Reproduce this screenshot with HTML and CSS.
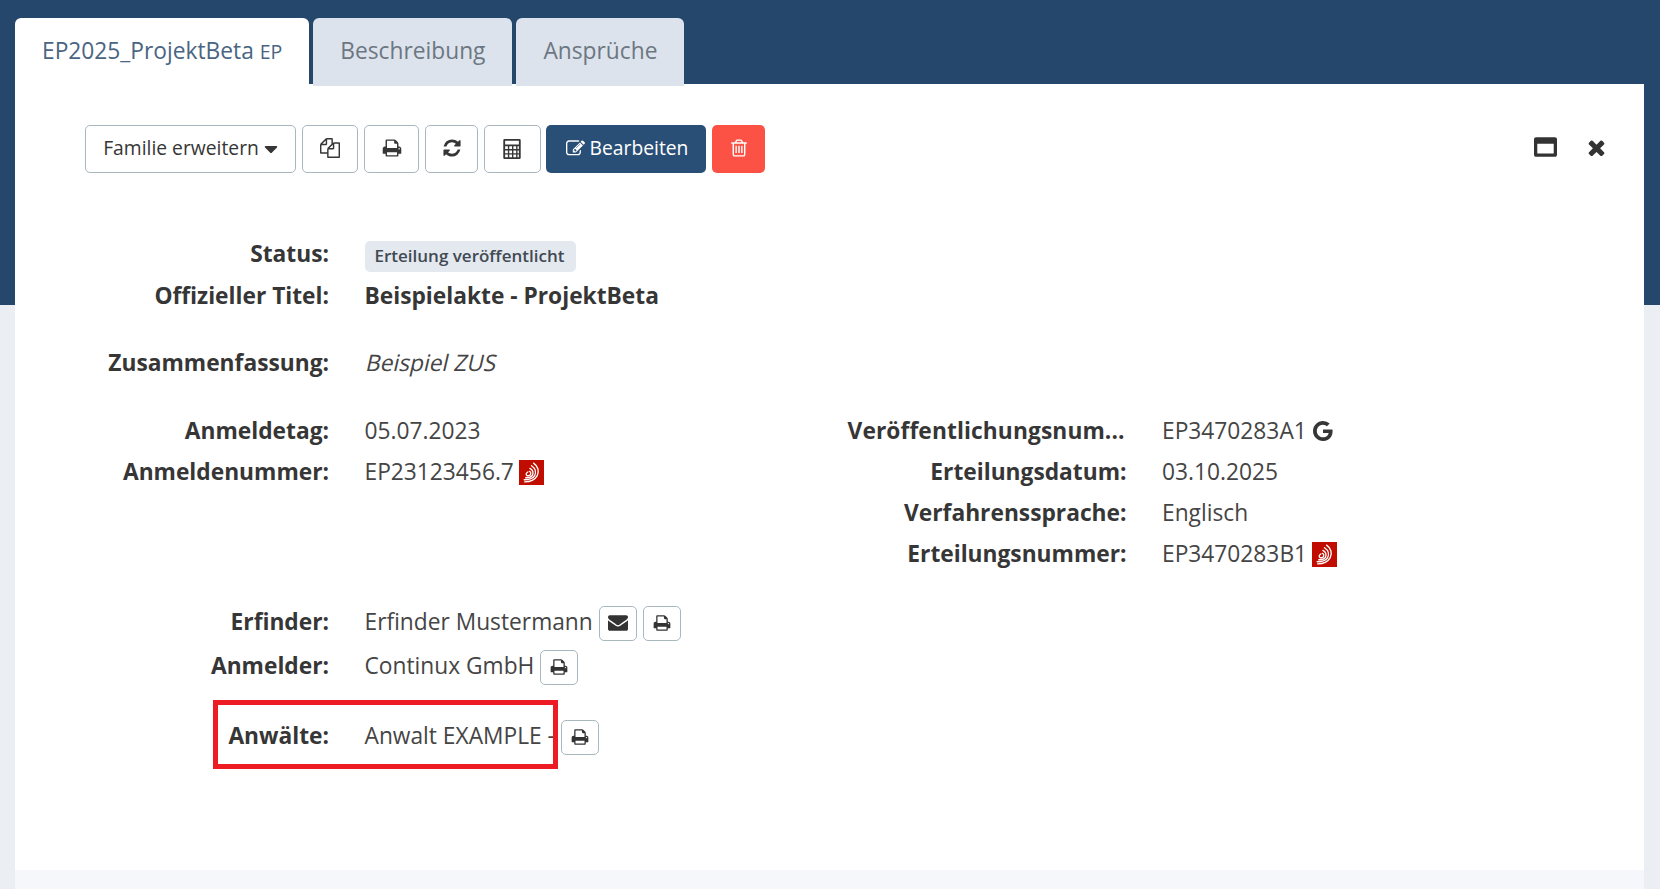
FILE: index.html
```html
<!DOCTYPE html>
<html lang="de">

<head>
    <meta charset="UTF-8">
    <title>EP2025_ProjektBeta</title>
    <link rel="stylesheet" href="styles.css">
</head>

<body>
    <svg class="icon-defs" xmlns="http://www.w3.org/2000/svg">
        <symbol id="i-print" viewBox="0 0 1792 1792"><path d="M448 1536h896v-256h-896v256zm0-640h896v-384h-160q-40 0-68-28t-28-68v-160h-640v640zm1152 64q0-26-19-45t-45-19-45 19-19 45 19 45 45 19 45-19 19-45zm128 0v416q0 13-9.500 22.500t-22.500 9.500h-224v160q0 40-28 68t-68 28h-960q-40 0-68-28t-28-68v-160h-224q-13 0-22.500-9.500t-9.500-22.500v-416q0-79 56.500-135.500t135.500-56.500h64v-544q0-40 28-68t68-28h672q40 0 88 20t76 48l152 152q28 28 48 76t20 88v256h64q79 0 135.500 56.500t56.500 135.500z"/></symbol>
        <symbol id="i-files" viewBox="0 0 1792 1792"><path d="M1696 384q40 0 68 28t28 68v1216q0 40-28 68t-68 28h-960q-40 0-68-28t-28-68v-288h-544q-40 0-68-28t-28-68v-672q0-40 20-88t48-76l408-408q28-28 76-48t88-20h416q40 0 68 28t28 68v328q68-40 128-40h416zm-544 213l-299 299h299v-299zm-640-384l-299 299h299v-299zm196 647l316-316v-416h-384v416q0 40-28 68t-68 28h-416v640h512v-256q0-40 20-88t48-76zm956 804v-1152h-384v416q0 40-28 68t-68 28h-416v640h896z"/></symbol>
        <symbol id="i-refresh" viewBox="0 0 1792 1792"><path d="M1639 1056q0 5-1 7-64 268-268 434.500t-478 166.500q-146 0-282.500-55t-243.500-157l-129 129q-19 19-45 19t-45-19-19-45v-448q0-26 19-45t45-19h448q26 0 45 19t19 45-19 45l-137 137q71 66 161 102t187 36q134 0 250-65t186-179q11-17 53-117 8-23 30-23h192q13 0 22.500 9.500t9.500 22.500zm25-800v448q0 26-19 45t-45 19h-448q-26 0-45-19t-19-45 19-45l138-138q-148-137-349-137-134 0-250 65t-186 179q-11 17-53 117-8 23-30 23h-199q-13 0-22.500-9.500t-9.500-22.500v-7q65-268 270-434.500t480-166.500q146 0 284 55.500t245 156.500l130-129q19-19 45-19t45 19 19 45z"/></symbol>
        <symbol id="i-calc" viewBox="0 0 20 24"><path fill-rule="evenodd" d="M2 1h16a1.500 1.500 0 0 1 1.500 1.500v19a1.500 1.500 0 0 1-1.500 1.500h-16a1.500 1.500 0 0 1-1.500-1.500v-19a1.500 1.500 0 0 1 1.500-1.500zm.5 2v4h15v-4zm0 6v3h3v-3zm4.500 0v3h3v-3zm4.500 0v3h3v-3zm4.500 0v3h1.500v-3zm-9 4.500v3h3v-3zm-4.500 0v3h3v-3zm9 0v3h3v-3zm4.500 0v3h1.500v-3zm-13.500 4.500v3h3v-3zm4.500 0v3h3v-3zm4.500 0v3h3v-3zm4.500 0v3h1.500v-3z"/></symbol>
        <symbol id="i-edit" viewBox="0 0 1792 1792"><path d="M888 1184l116-116-152-152-116 116v56h96v96h56zm440-720q-16-16-33 1l-350 350q-17 17-1 33t33-1l350-350q17-17 1-33zm80 594v190q0 119-84.500 203.500t-203.500 84.500h-832q-119 0-203.500-84.500t-84.500-203.500v-832q0-119 84.500-203.500t203.500-84.500h832q63 0 117 25 15 7 18 23 3 17-9 29l-49 49q-14 14-32 8-23-6-45-6h-832q-66 0-113 47t-47 113v832q0 66 47 113t113 47h832q66 0 113-47t47-113v-126q0-13 9-22l64-64q15-15 35-7t20 29zm-96-738l288 288-672 672h-288v-288zm444 132l-92 92-288-288 92-92q28-28 68-28t68 28l152 152q28 28 28 68t-28 68z"/></symbol>
        <symbol id="i-trash" viewBox="0 0 1792 1792"><path d="M704 736v576q0 14-9 23t-23 9h-64q-14 0-23-9t-9-23v-576q0-14 9-23t23-9h64q14 0 23 9t9 23zm256 0v576q0 14-9 23t-23 9h-64q-14 0-23-9t-9-23v-576q0-14 9-23t23-9h64q14 0 23 9t9 23zm256 0v576q0 14-9 23t-23 9h-64q-14 0-23-9t-9-23v-576q0-14 9-23t23-9h64q14 0 23 9t9 23zm128 724v-948h-896v948q0 22 7 40.500t14.500 27 10.500 8.500h832q3 0 10.500-8.500t14.500-27 7-40.500zm-672-1076h448l-48-117q-7-9-17-11h-317q-10 2-17 11zm928 32v64q0 14-9 23t-23 9h-96v948q0 83-47 143.500t-113 60.500h-832q-66 0-113-58.500t-47-141.500v-952h-96q-14 0-23-9t-9-23v-64q0-14 9-23t23-9h309l70-167q15-37 54-63t79-26h320q40 0 79 26t54 63l70 167h309q14 0 23 9t9 23z"/></symbol>
        <symbol id="i-caret" viewBox="320 640 1152 640"><path d="M1408 704q0 26-19 45l-448 448q-19 19-45 19t-45-19l-448-448q-19-19-19-45t19-45 45-19h896q26 0 45 19t19 45z"/></symbol>
        <symbol id="i-window" viewBox="0 128 1792 1536"><path d="M256 1408h1280v-768h-1280v768zm1536-1120v1216q0 66-47 113t-113 47h-1472q-66 0-113-47t-47-113v-1216q0-66 47-113t113-47h1472q66 0 113 47t47 113z"/></symbol>
        <symbol id="i-close" viewBox="256 256 1280 1280"><path d="M1490 1322q0 40-28 68l-136 136q-28 28-68 28t-68-28l-294-294-294 294q-28 28-68 28t-68-28l-136-136q-28-28-28-68t28-68l294-294-294-294q-28-28-28-68t28-68l136-136q28-28 68-28t68 28l294 294 294-294q28-28 68-28t68 28l136 136q28 28 28 68t-28 68l-294 294 294 294q28 28 28 68z"/></symbol>
        <symbol id="i-mail" viewBox="0 256 1792 1408"><path d="M1792 710v794q0 66-47 113t-113 47h-1472q-66 0-113-47t-47-113v-794q44 49 101 87 362 246 497 345 57 42 92.500 65.500t94.500 48 110 24.500h2q51 0 110-24.500t94.500-48 92.500-65.500q170-123 498-345 57-39 100-87zm0-294q0 79-49 151t-122 123q-376 261-468 325-10 7-42.500 30.500t-54 38-52 32.500-57.500 27-50 9h-2q-23 0-50-9t-57.500-27-52-32.500-54-38-42.500-30.500q-91-64-262-182.500t-205-142.500q-62-42-117-115.500t-55-136.500q0-78 41.500-130t118.500-52h1472q65 0 112.500 47t47.500 113z"/></symbol>
        <symbol id="i-google" viewBox="128 128 1536 1536"><path d="M896 786h725q12 67 12 128 0 217-91 387.500t-259.500 266.500-386.500 96q-157 0-299-60.500t-245-163.500-163.500-245-60.500-299 60.500-299 163.500-245 245-163.500 299-60.500q300 0 515 201l-209 201q-123-119-306-119-129 0-238.500 65t-173.500 176.500-64 243.500 64 243.500 173.500 176.500 238.500 65q87 0 160-24t120-60 82-82 51.500-87 22.500-78h-436v-264z"/></symbol>
        <symbol id="i-epo" viewBox="0 0 24 24">
            <rect width="24" height="24" fill="#c00d00"/>
            <g fill="none" stroke="#fff" stroke-linecap="round">
                <path stroke-width="1.300" d="M14 3c4.500 3 5.500 8 3.500 12-2 3.500-6 6-12 6"/>
                <path stroke-width="1.300" d="M12 5.500c4 2.500 4.500 6.500 3 9.500-1.500 2.500-5 4-10 4"/>
                <path stroke-width="1.300" d="M10.500 8c3 1.500 3.500 4.500 2.500 6.500-1 2-3.500 2.500-6.500 2.500"/>
                <path stroke-width="1.300" d="M10 11c1.500.5 1.500 2 1 3-.7 1.200-3 1.500-3.800.5-.6-1 .2-2.300 1.300-3"/>
            </g>
        </symbol>
    </svg>

    <main class="page">
        <nav class="tabs">
            <a class="tab active">EP2025_ProjektBeta <small>EP</small></a>
            <a class="tab">Beschreibung</a>
            <a class="tab">Ansprüche</a>
        </nav>

        <section class="panel">
            <div class="toolbar">
                <div class="btn-group">
                    <button class="btn btn-family">Familie erweitern <svg class="caret"><use href="#i-caret"/></svg></button>
                    <button class="btn btn-icon w-copy"><svg class="ico"><use href="#i-files"/></svg></button>
                    <button class="btn btn-icon w-print"><svg class="ico"><use href="#i-print"/></svg></button>
                    <button class="btn btn-icon w-refresh"><svg class="ico"><use href="#i-refresh"/></svg></button>
                    <button class="btn btn-icon w-calc"><svg class="ico ico-calc"><use href="#i-calc"/></svg></button>
                    <button class="btn btn-primary"><svg class="ico ico-edit"><use href="#i-edit"/></svg> Bearbeiten</button>
                    <button class="btn btn-danger"><svg class="ico"><use href="#i-trash"/></svg></button>
                </div>
                <div class="window-actions">
                    <svg class="win-ico"><use href="#i-window"/></svg>
                    <svg class="close-ico"><use href="#i-close"/></svg>
                </div>
            </div>

            <div class="group group-head">
                <div class="field field-status">
                    <div class="label">Status:</div>
                    <div class="value"><span class="badge">Erteilung veröffentlicht</span></div>
                </div>
                <div class="field">
                    <div class="label">Offizieller Titel:</div>
                    <div class="value strong">Beispielakte - ProjektBeta</div>
                </div>
            </div>

            <div class="group group-summary">
                <div class="field">
                    <div class="label">Zusammenfassung:</div>
                    <div class="value"><span class="summary">Beispiel ZUS</span></div>
                </div>
            </div>

            <div class="columns">
                <div class="group">
                    <div class="field">
                        <div class="label">Anmeldetag:</div>
                        <div class="value">05.07.2023</div>
                    </div>
                    <div class="field">
                        <div class="label">Anmeldenummer:</div>
                        <div class="value">EP23123456.7 <svg class="epo"><use href="#i-epo"/></svg></div>
                    </div>
                </div>
                <div class="group">
                    <div class="field">
                        <div class="label label-cut">Veröffentlichungsnum...</div>
                        <div class="value">EP3470283A1 <svg class="google"><use href="#i-google"/></svg></div>
                    </div>
                    <div class="field">
                        <div class="label">Erteilungsdatum:</div>
                        <div class="value">03.10.2025</div>
                    </div>
                    <div class="field">
                        <div class="label">Verfahrenssprache:</div>
                        <div class="value">Englisch</div>
                    </div>
                    <div class="field">
                        <div class="label">Erteilungsnummer:</div>
                        <div class="value">EP3470283B1 <svg class="epo"><use href="#i-epo"/></svg></div>
                    </div>
                </div>
            </div>

            <div class="group group-people">
                <div class="field person">
                    <div class="label">Erfinder:</div>
                    <div class="value">Erfinder Mustermann
                        <button class="btn-mini"><svg class="mini-ico"><use href="#i-mail"/></svg></button>
                        <button class="btn-mini"><svg class="mini-ico"><use href="#i-print"/></svg></button>
                    </div>
                </div>
                <div class="field person">
                    <div class="label">Anmelder:</div>
                    <div class="value">Continux GmbH
                        <button class="btn-mini"><svg class="mini-ico"><use href="#i-print"/></svg></button>
                    </div>
                </div>
                <div class="field person lawyers">
                    <div class="highlight"></div>
                    <div class="label">Anwälte:</div>
                    <div class="value">Anwalt EXAMPLE -
                        <button class="btn-mini"><svg class="mini-ico"><use href="#i-print"/></svg></button>
                    </div>
                </div>
            </div>
        </section>
        <div class="panel-foot"></div>
    </main>
</body>

</html>
```
FILE: styles.css
```css
* {
    box-sizing: border-box;
}

html,
body {
    height: 889px;
}

body {
    margin: 0;
    overflow: hidden;
    font-family: "Open Sans", sans-serif;
    font-size: 22.75px;
    color: #363636;
    background: linear-gradient(#24476b 305px, #ebeff4 305px);
}

.icon-defs {
    display: none;
}

.page {
    margin: 0 16px 0 15px;
    padding-top: 18px;
}

/* tabs */
.tabs {
    display: flex;
    gap: 4px;
    height: 66px;
}

.tab {
    height: 68px;
    padding: 17px 27px 0;
    line-height: 32px;
    border-radius: 6px 6px 0 0;
    background: #dce3ed;
    color: #6d7781;
}

.tab.active {
    height: 66px;
    background: #fff;
    color: #4a6582;
}

.tab small {
    font-size: 19.5px;
}

/* panel */
.panel {
    height: 786px;
    padding: 41px 39px 0 70px;
    background: #fff;
}

.panel-foot {
    height: 19px;
    background: #f5f7fa;
}

.toolbar {
    display: flex;
    justify-content: space-between;
    align-items: center;
}

.btn-group {
    display: flex;
    gap: 6px;
}

.btn {
    height: 48px;
    border: 1px solid #a9b8bf;
    border-radius: 5px;
    background: #fff;
    color: #363636;
    font-family: inherit;
    font-size: 19.3px;
    padding: 0 0 4px;
    display: flex;
    align-items: center;
    justify-content: center;
}

.btn-family {
    width: 211px;
    gap: 5px;
}

.w-copy {
    width: 56px;
}

.w-print {
    width: 55px;
}

.w-refresh {
    width: 53px;
}

.w-calc {
    width: 57px;
    padding-right: 2px;
}

.btn-primary {
    width: 160px;
    margin-left: -1px;
    gap: 5px;
    border: 0;
    background: #2a4f76;
    color: #fff;
}

.btn-danger {
    width: 53px;
    border: 0;
    background: #fc5246;
    color: #fff;
}

.ico {
    width: 20px;
    height: 20px;
    margin-top: 2px;
    fill: currentColor;
}

.ico-calc {
    height: 22px;
    margin-top: 3px;
}

.ico-edit {
    width: 19px;
    height: 19px;
    margin-left: 2px;
}

.caret {
    width: 14px;
    height: 8px;
    margin-top: 5px;
    fill: currentColor;
}

.window-actions {
    display: flex;
    align-items: center;
    gap: 31px;
    margin-top: -4px;
}

.win-ico {
    width: 23px;
    height: 20px;
    fill: #333;
}

.close-ico {
    width: 17px;
    height: 17px;
    fill: #333;
}

/* fields */
.group-head {
    margin-top: 60px;
}

.group-summary {
    margin-top: 26px;
}

.columns {
    display: grid;
    grid-template-columns: 797.5px 1fr;
    margin: 27px 0 0 -35px;
}

.group-head,
.group-summary,
.group-people {
    margin-left: -35px;
}

.group-people {
    margin-top: 26px;
}

.field {
    display: flex;
    height: 41px;
    line-height: 41px;
}

.field-status {
    height: 42px;
}

.label {
    width: 279px;
    text-align: right;
    font-weight: 700;
    white-space: nowrap;
}

.label-cut {
    padding-right: 4px;
    letter-spacing: 0.1px;
}

.value {
    margin-left: 35.5px;
    display: flex;
    align-items: center;
    gap: 6px;
    white-space: nowrap;
    color: #454545;
}

.strong {
    font-weight: 700;
    color: #363636;
}

.summary {
    display: inline-block;
    margin-left: -3px;
    transform: skewX(-13deg);
    transform-origin: bottom left;
}

.badge {
    height: 31px;
    margin-top: 5px;
    padding: 0 12px 0 10px;
    line-height: 30px;
    border-radius: 5px;
    background: #e4e8ef;
    color: #414a53;
    font-size: 17px;
    font-weight: 600;
}

.epo {
    width: 25px;
    height: 25px;
    margin: 2px 0 0 -1px;
}

.google {
    width: 20px;
    height: 20px;
    fill: #363636;
}

/* people */
.person {
    height: 44px;
    line-height: 44px;
}

.btn-mini {
    width: 38px;
    height: 35px;
    margin-top: 2px;
    padding: 0;
    border: 1px solid #a9b8bf;
    border-radius: 5px;
    background: #fff;
    display: flex;
    align-items: center;
    justify-content: center;
    color: #333;
}

.mini-ico {
    width: 20px;
    height: 18px;
    fill: currentColor;
}

.lawyers {
    position: relative;
    margin-top: 26px;
}

.highlight {
    position: absolute;
    left: 163px;
    top: -14px;
    width: 345px;
    height: 69px;
    border: 5px solid #ed1c24;
}
```
